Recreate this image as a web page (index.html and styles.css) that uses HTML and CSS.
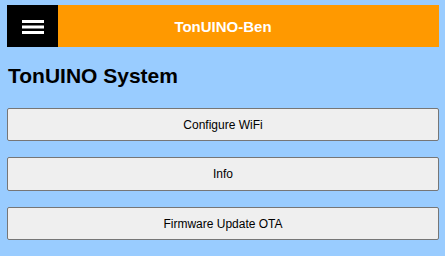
FILE: index.html
```html
<!DOCTYPE html>
<html lang="en">
<head>
    <meta charset="UTF-8">
    <meta name="viewport" content="width=device-width, initial-scale=1.0">
    <title>TonUINO System</title>
    <link rel="stylesheet" href="styles.css">
</head>
<body>
<div class="page">
    <div class="topbar">
        <div class="topbar-title">TonUINO-Ben</div>
        <div class="menu-btn">
            <svg width="22" height="14" viewBox="0 0 22 14">
                <rect x="0" y="0" width="22" height="3" fill="#fff"/>
                <rect x="0" y="5.5" width="22" height="3" fill="#fff"/>
                <rect x="0" y="11" width="22" height="3" fill="#fff"/>
            </svg>
        </div>
    </div>

    <h1>TonUINO System</h1>

    <div class="menu-list">
        <button>Configure WiFi</button>
        <button>Info</button>
        <button>Firmware Update OTA</button>
    </div>
</div>
</body>
</html>
```

FILE: styles.css
```css
body {
    margin: 0;
    background-color: #99ccff; /* hellblau */
    font-family: "Liberation Sans", Arial, sans-serif;
}

.page {
    padding: 5px 6px 0 7px;
}

.topbar {
    display: grid;
    grid-template-columns: 51px 1fr;
    height: 42px;
    background-color: #ff9900;
}

.topbar-title {
    grid-column: 1 / -1;
    grid-row: 1;
    display: flex;
    align-items: center;
    justify-content: center;
    color: white;
    font-size: 15px;
    font-weight: bold;
}

.menu-btn {
    grid-column: 1;
    grid-row: 1;
    display: flex;
    align-items: center;
    justify-content: center;
    padding-top: 1px;
    background-color: black;
}

.menu-btn svg {
    display: block;
}

h1 {
    margin: 17px 0 0 1px;
    font-size: 21px;
    line-height: 24px;
}

.menu-list {
    display: flex;
    flex-direction: column;
    gap: 16.2px;
    margin-top: 20px;
}

button {
    height: 33.3px;
    padding: 0;
    background-color: #efefef;
    border: 1px solid #767676;
    border-radius: 2px;
    color: black;
    font-family: "Liberation Sans", Arial, sans-serif;
    font-size: 12px;
    cursor: pointer;
}

button:hover {
    background-color: #e5e5e5;
}
```
